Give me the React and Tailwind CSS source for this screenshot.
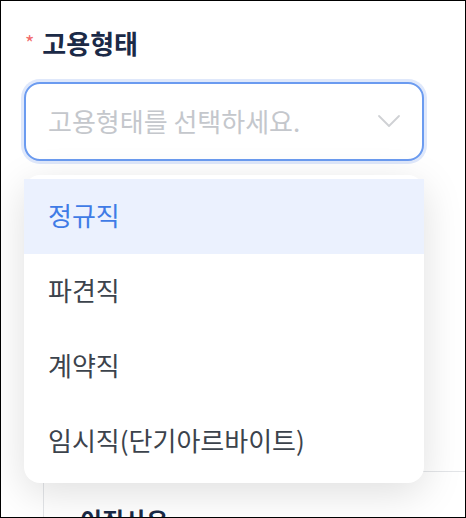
import React from "react";

const options = ["정규직", "파견직", "계약직", "임시직(단기아르바이트)"];

const ChevronDown = () => (
  <svg width="24" height="14" viewBox="0 0 24 14" fill="none">
    <path d="M2 2l10 10L22 2" stroke="#cfd1d4" strokeWidth="1.8" strokeLinecap="round" strokeLinejoin="round" />
  </svg>
);

export default function App() {
  const selected = 0;

  return (
    <div
      className="relative w-[466px] h-[518px] overflow-hidden border border-black bg-white"
      style={{ fontFamily: '"Noto Sans CJK KR", "Noto Sans", sans-serif' }}
    >
      <div className="pl-[23px] pt-[23px]">
        <label className="flex items-start gap-[8px]">
          <span className="text-[20px] leading-none text-[#f26b6b] mt-[9px] ml-[1px]">*</span>
          <span className="text-[26px] font-bold leading-[38px] text-[#1b2a47]">고용형태</span>
        </label>

        <div className="mt-[20px] w-[400px] h-[79px] rounded-[16px] border-2 border-[#6b9bf0] ring-[3px] ring-[#dfe8fb] bg-white flex items-center justify-between pl-[22px] pr-[21px] pb-[2px]">
          <span className="text-[26px] text-[#c4c7cc]">고용형태를 선택하세요.</span>
          <ChevronDown />
        </div>

        <div className="mt-[310px] ml-[19px] -mr-8 h-[80px] rounded-tl-[12px] border border-[#e3e5e8] pl-9 pt-[30px]">
          <span className="text-[24px] font-bold text-[#1b2a47]">이직사유</span>
        </div>
      </div>

      <ul className="absolute left-[23px] top-[174px] w-[400px] rounded-[16px] bg-white py-[4px] shadow-[0_10px_40px_rgba(0,0,0,0.13)]">
        {options.map((opt, i) => (
          <li
            key={opt}
            className={
              i === selected
                ? "h-[75px] flex items-center pl-6 pb-[5px] bg-[#ebf1fe] text-[26px] text-[#3f7be6]"
                : "h-[75px] flex items-center pl-6 pb-[5px] text-[26px] text-[#3c434c]"
            }
          >
            {opt}
          </li>
        ))}
      </ul>
    </div>
  );
}
